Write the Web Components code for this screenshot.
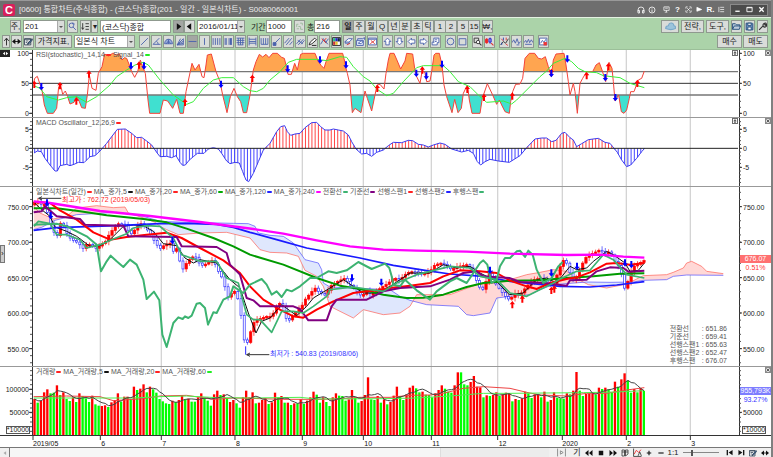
<!DOCTYPE html>
<html lang="ko">
<head>
<meta charset="utf-8">
<title>통합차트</title>
<style>
  body {
    margin: 0;
    font-family: "Liberation Sans", "Noto Sans CJK KR", sans-serif;
    font-size: 8px;
    color: #222;
    background: #fff;
  }
</style>
</head>
<body>
<chart-window></chart-window>

<script>
// 16x16 icons, drawn with currentColor unless noted
const ICONS = {
  search: '<circle cx="6" cy="6" r="4"/><path d="M9 9l5 5M8 1l4 3"/>',
  list: '<path d="M3 2v11M1 10l2 3 2-3M8 3h6M8 8h6M8 13h6"/>',
  play: '<path d="M5 2l8 6-8 6z" fill="#111" stroke="none"/>',
  back: '<path d="M11 2L3 8l8 6z" fill="#111" stroke="none"/>',
  swap: '<path d="M6 3L0 8l6 5zM10 3l6 5-6 5z" fill="#111" stroke="none"/><path d="M5 8h6" stroke="#111"/>',
  swapWhite: '<path d="M0 0h16v16H0z" fill="#222" stroke="none"/><path d="M7 4L2 8l5 4zM9 4l5 4-5 4z" fill="#fff" stroke="none"/>',
  up: '<path d="M8 15V3M4 7l4-5 4 5" stroke="#222"/>',
  edit: '<path d="M1 3h11v11H1z" fill="#fff" stroke="#345"/><path d="M1 4h11M3 7h5M3 10h3" stroke="#345"/><path d="M14 3l-7 8-1 2 3-1 6-7z" fill="#58c" stroke="#234"/>',
  sync: '<path d="M3 9V4h3M9 2h4v4M3 12h4M10 9v4h4M6 8h4" stroke="#9b9"/>',
  cloud: '<path d="M1 11q0-4 4-4 1-5 5-4 3 1 3 4 3 0 2 4-6 3-14 0z" fill="#9cc4dc" stroke="#7aa9c9"/>',
  folder: '<path d="M1 13V3h5l2 2h6v3M1 13l3-6h11l-2 6z" fill="#bcd" stroke="#234e7a"/>',
  save: '<path d="M2 2h11l1 1v11H2z" fill="#6d8fc0" stroke="#234e7a"/><path d="M5 2h6v4H5zM5 9h6v5H5z" fill="#fff" stroke="#234e7a"/>',
  wrench: '<path d="M2 14l7-7M9 7q-1-4 4-5l-1 3 2 1 1-2q1 5-4 5z" stroke="#333" stroke-width="2"/>',
  line: '<path d="M2 14L14 2"/>',
  angle: '<path d="M13 2L2 13h13M8 8q3 1 3 5"/>',
  fan: '<path d="M1 12q1-8 7-8t7 8z" fill="#9db0dd"/><path d="M4 12l4-5 4 5M8 4v8"/>',
  gann: '<path d="M2 14L13 3v11zM2 14L14 7M2 14L8 3M2 14l11-3"/>',
  hline: '<path d="M1 8h14"/>',
  vline: '<path d="M8 2v12"/>',
  vlines: '<path d="M2 2v12M6 2v12M10 2v12M14 2v12"/>',
  vbars: '<path d="M2 2v12M4 2v12M9 2v12M13 2v12" /><path d="M12 2v12" stroke-width="3"/>',
  grid: '<path d="M1 2h14M1 6h14M1 10h14M3 14h10M4 2v12M8 2v12M12 2v12"/>',
  hbars: '<path d="M2 1v14M14 1v14M2 4h12M2 8h12M2 11h12"/>',
  fork: '<path d="M2 2v11h12V2M6 2v11M10 2v11"/>',
  ray: '<path d="M14 2L5 11"/><path d="M2 10h5v5H2z" fill="#4a62ad"/>',
  channel: '<path d="M1 11L9 2M4 14L14 2M10 14l5-6"/>',
  hatch: '<path d="M1 12L8 4M4 14l9-10M9 13l6-7M3 6l9 6"/>',
  pencil: '<path d="M2 14l2-5 8-7 3 3-8 7z" fill="#fff" stroke="#222"/><path d="M7 15h8" stroke="#222"/>',
  cut: '<path d="M1 13l5-8 4 5 5-7M5 2l9 11" /><path d="M3 3l8 8M11 2l-4 5" stroke="#d33"/>',
  palette: '<path d="M1 1h14v14H1z" fill="#fff" stroke="#222"/><path d="M2 2h4v6H2z" fill="#2b8" stroke="none"/><path d="M6 2h4v6H6z" fill="#22c" stroke="none"/><path d="M10 2h4v6h-4z" fill="#124" stroke="none"/><path d="M2 8h4v6H2z" fill="#c33" stroke="none"/><path d="M6 8h4v6H6z" fill="#e5c22b" stroke="none"/>',
  erase: '<path d="M2 8l6-5h7l-6 6H2zM2 8v3h7V9" fill="#fff"/><path d="M5 14l6-3" stroke="#d33"/>',
  eraseAll: '<path d="M1 6h12v9H1zM3 6V3h9l3-2v4" fill="#dfe8fa"/><path d="M4 11l5-4 4 1-4 4z" fill="#fff"/>',
  chartX: '<path d="M1 2h14v12H1z" fill="#fff"/><path d="M1 4h14"/><path d="M4 12l8-6M5 6l7 6" stroke="#d33"/>',
  aUp: '<path d="M8 2l6 6h-3v6H5V8H2z" fill="#fff"/>',
  aDown: '<path d="M8 14l6-6h-3V2H5v6H2z" fill="#fff"/>',
  aLeft: '<path d="M2 8l6-6v3h6v6H8v3z" fill="#fff"/>',
  aRight: '<path d="M14 8L8 2v3H2v6h6v3z" fill="#fff"/>',
  scroll: '<path d="M5 2h9v8h-3v4H2V9h3z" fill="#fff"/><path d="M7 5h4M7 8h3M5 9v2"/>',
  circle: '<circle cx="8" cy="8" r="6"/>',
  square: '<path d="M2 3h12v11H2z"/>',
  zoomSel: '<path d="M2 2h8v8H2z" stroke="#333"/><circle cx="9" cy="9" r="3" fill="#fff" stroke="#333"/><path d="M11 11l4 4" stroke="#333" stroke-width="2"/>',
  candles: '<path d="M3 2v10M1 4h4v6H1z" fill="#e22" stroke="#e22"/><path d="M9 1v11M7 3h4v6H7z" fill="#fff" stroke="#22c"/><path d="M11 11l4 4" stroke="#d33" stroke-width="2"/>',
  signal: '<path d="M1 14l5-6 4 3 5-8" stroke="#333"/><path d="M2 3l4 4M10 12l4 3M11 1v5" stroke="#d33"/><path d="M6 1v5M3 10v4" stroke="#24a"/>',
  wave: '<path d="M0 10l3-5 3 6 3-8 3 9 3-4M8 14h5"/>',
  wave2: '<path d="M0 10l3-4 2 4 3-6 2 6 3-5 3 5M2 13h12"/>',
  chartRed: '<path d="M1 2h13v12H1z" fill="#fff"/><path d="M3 11l3-5 3 4 3-6"/><path d="M8 9h6v6H8z" fill="#e33" stroke="none"/>',
  headset: '<path d="M2 11V8q0-6 6-6t6 6v3M2 9h3v5H2zM11 9h3v5h-3z"/>',
  info: '<circle cx="8" cy="8" r="6"/><path d="M8 7v5M8 4v1"/>',
  screen: '<path d="M2 2h12v8H2zM8 10v4M4 14h6M5 5h6"/>',
  expand: '<path d="M2 6V2h4M10 2h4v4M14 10v4h-4M6 14H2v-4M5 5l6 6M11 5l-6 6"/>',
  flag: '<path d="M2 3l11 5-11 4z" fill="#fff"/>',
  menu: '<path d="M5 3h9M5 8h9M5 13h9M2 2v12"/>',
  min: '<path d="M3 12h10" stroke-width="3"/>',
  max: '<path d="M2 3h12v10H2zM2 4h12" stroke-width="2"/>',
  close: '<path d="M3 3l10 10M13 3L3 13" stroke-width="3"/>',
  rewind: '<path d="M7 2L0 8l7 6zM15 2L8 8l7 6z" fill="#111" stroke="none"/>',
  forward: '<path d="M1 2l7 6-7 6zM9 2l7 6-7 6z" fill="#111" stroke="none"/>',
  stop: '<path d="M2 2h12v12H2z" fill="#111" stroke="none"/>',
  step: '<path d="M1 1v14M15 1v14M6 5l5 3-5 3z" stroke="#888"/>',
  copy: '<path d="M2 2h5v12H2zM9 2h5v8M9 2v12l5-4M2 6h12" stroke="#333"/>',
  chartA: '<path d="M1 1v14h14" stroke="#444"/><path d="M2 11l4-7 4 4 4-5" stroke="#e33"/><path d="M9 14l3-7 3 7" stroke="#444"/>',
  plus: '<path d="M8 2v12M2 8h12" stroke="#111" stroke-width="3"/>',
  minus: '<path d="M1 8h14" stroke="#111" stroke-width="3"/>',
  first: '<path d="M3 2v12" stroke="#111" stroke-width="3"/><path d="M15 2L6 8l9 6z" fill="#111" stroke="none"/>',
  last: '<path d="M13 2v12" stroke="#111" stroke-width="3"/><path d="M1 2l9 6-9 6z" fill="#111" stroke="none"/>',
  left: '<path d="M11 3L4 8l7 5z" fill="#aaa" stroke="none"/>',
  paneBox: '<path d="M1 1h14v14H1z" fill="#fff" stroke="#222" stroke-width="2"/><path d="M4 7l4-4 4 4zM4 9l4 4 4-4z" fill="#222" stroke="none"/>',
  paneClose: '<path d="M1 1h14v14H1z" fill="#ddd" stroke="#555" stroke-width="2"/><path d="M4 4l8 8M12 4l-8 8" stroke="#333" stroke-width="2"/>',
};

const icon = (name, size = 9) =>
  `<svg width="${size}" height="${size}" viewBox="0 0 16 16" fill="none" stroke="currentColor" stroke-width="1.6" aria-hidden="true">${ICONS[name]}</svg>`;

class ToolButton extends HTMLElement {
  constructor() {
    super();
    const shadow = this.attachShadow({ mode: 'open' });
    const name = this.getAttribute('icon');
    shadow.innerHTML = `
      <style>
        :host { display: block; flex: none; width: 11px; height: 13px; }
        button {
          box-sizing: border-box;
          width: 100%;
          height: 100%;
          padding: 0;
          display: flex;
          align-items: center;
          justify-content: center;
          font: inherit;
          line-height: 10px;
          white-space: nowrap;
          color: var(--ink, #4a62ad);
          background: #d9dcd9;
          border: 1px solid #8f998f;
        }
        :host([text]) button { color: #222; }
        :host([on]) button { background: #a3a6a3; }
        :host([text][on]) button { font-weight: bold; }
        :host([flat]) button { background: none; border: none; }
        svg { flex: none; }
      </style>
      <button type="button" title="${this.getAttribute('label') || name || ''}">${name ? icon(name, this.getAttribute('size') || 9) : '<slot></slot>'}</button>
    `;
  }
}

class ToolSelect extends HTMLElement {
  constructor() {
    super();
    const shadow = this.attachShadow({ mode: 'open' });
    shadow.innerHTML = `
      <style>
        :host { display: grid; grid-template-columns: 1fr 7px; flex: none; height: 13px; box-sizing: border-box; border: 1px solid #8f998f; background: #fff; }
        select {
          grid-area: 1 / 1 / 2 / 3;
          appearance: none;
          min-width: 0;
          border: none;
          padding: 0 0 0 1px;
          font: inherit;
          color: #222;
          background: none;
          line-height: 11px;
        }
        span { grid-area: 1 / 2; background: #d9dcd9; border-left: 1px solid #aaa; display: flex; align-items: center; justify-content: center; pointer-events: none; }
        span::after { content: ""; border: 2px solid transparent; border-top-color: #555; border-bottom: none; }
      </style>
      <select aria-label="${this.getAttribute('label')}"><option>${this.getAttribute('value')}</option></select>
      <span></span>
    `;
  }
}

class ToolField extends HTMLElement {
  constructor() {
    super();
    const shadow = this.attachShadow({ mode: 'open' });
    const label = this.getAttribute('label');
    shadow.innerHTML = `
      <style>
        :host { display: flex; flex: none; height: 13px; }
        label { display: flex; width: 100%; align-items: center; white-space: nowrap; }
        label span { flex: none; }
        input {
          box-sizing: border-box;
          height: 13px;
          flex: 1;
          min-width: 0;
          border: 1px solid #8f998f;
          padding: 0 1px;
          font: inherit;
          color: #222;
          background: #fff;
        }
      </style>
      <label>${label ? `<span>${label}</span>` : ''}<input type="text" value="${this.getAttribute('value')}" aria-label="${label || '종목명'}"></label>
    `;
  }
}

class TitleBar extends HTMLElement {
  constructor() {
    super();
    const shadow = this.attachShadow({ mode: 'open' });
    shadow.innerHTML = `
      <style>
        :host {
          display: flex;
          align-items: center;
          box-sizing: border-box;
          height: 17px;
          padding: 1px 3px 0;
          color: #ececec;
          background: #6e6e6e;
          border-top: 1px solid #999;
          --ink: #fff;
        }
        .logo { width: 12px; height: 12px; margin-right: 4px; border-radius: 2px; background: #d91f5c; font-size: 11px; line-height: 12px; font-weight: bold; text-align: center; color: #fff; }
        h1 { margin: 0; flex: 1; font-size: 8px; line-height: 12px; font-weight: normal; white-space: nowrap; }
        nav { display: flex; }
        .window { margin-left: 3px; background: #4c4c4c; border: 1px solid #8a8a8a; }
        .window tool-button { height: 10px; width: 12px; }
        .gap { width: 4px; }
        b { color: #fff; }
      </style>
      <div class="logo">C</div>
      <h1><slot></slot></h1>
      <nav>
        <tool-button flat icon="headset" size="8"></tool-button>
        <tool-button flat icon="info" size="8"></tool-button>
        <div class="gap"></div>
        <tool-button flat icon="screen" size="7"></tool-button>
        <tool-button flat><b>?</b></tool-button>
        <tool-button flat icon="expand" size="7"></tool-button>
        <tool-button flat icon="flag" size="7"></tool-button>
        <tool-button flat><b>R.</b></tool-button>
        <tool-button flat icon="menu" size="7"></tool-button>
      </nav>
      <nav class="window">
        <tool-button flat icon="min" size="7"></tool-button>
        <tool-button flat icon="max" size="7"></tool-button>
        <tool-button flat icon="close" size="7"></tool-button>
      </nav>
    `;
  }
}

class SymbolBar extends HTMLElement {
  constructor() {
    super();
    const shadow = this.attachShadow({ mode: 'open' });
    const periods = ['일', '주', '월', 'Q', '년', '분', '초', '틱', '1', '2', '5', '15'];
    shadow.innerHTML = `
      <style>
        :host { display: flex; align-items: center; gap: 2px; padding: 2px 3px 2px 10px; background: #abd3a9; border-top: 1px solid #e4f2e2; }
        .join, .periods { display: flex; }
        .periods tool-button { width: 12px; margin-right: -1px; }
        .periods tool-button:nth-child(2n) { margin-right: 0; }
        .code { width: 42px; }
        .name { width: 71px; }
        .date { width: 48px; margin-right: 4px; }
        .term { width: 41px; }
        .count { width: 33px; }
        .end { margin-left: auto; display: flex; gap: 2px; }
        .w18 { width: 18px; }
        .w24 { width: 23px; }
      </style>
      <tool-button text>주,</tool-button>
      <tool-select class="code" label="종목코드" value="201"></tool-select>
      <tool-button icon="search"></tool-button>
      <div class="join">
        <tool-button icon="list" style="--ink:#333"></tool-button>
        <tool-button text style="width:7px">▾</tool-button>
      </div>
      <tool-field class="name" value="(코스닥)종합"></tool-field>
      <div class="join">
        <tool-button on icon="play"></tool-button>
        <tool-button icon="back"></tool-button>
      </div>
      <tool-select class="date" label="날짜" value="2016/01/11"></tool-select>
      <tool-field class="term" label="기간" value="1000"></tool-field>
      <tool-button icon="sync"></tool-button>
      <tool-field class="count" label="총" value="216"></tool-field>
      <div class="periods">${periods.map((p, i) => `<tool-button text ${i ? '' : 'on'}>${p}</tool-button>`).join('')}</div>
      <tool-button text>₩,</tool-button>
      <div class="end">
        <tool-button class="w18" icon="cloud" size="11"></tool-button>
        <tool-button class="w24" text>전략,</tool-button>
        <tool-button class="w24" text>도구,</tool-button>
        <tool-button icon="folder"></tool-button>
        <tool-button icon="save"></tool-button>
        <tool-button icon="wrench"></tool-button>
      </div>
    `;
  }
}

class DrawingBar extends HTMLElement {
  constructor() {
    super();
    const shadow = this.attachShadow({ mode: 'open' });
    const groups = [
      ['line', 'angle', 'fan', 'gann', 'hline', 'vline', 'vlines', 'vbars', 'grid', 'hbars', 'fork', 'ray', 'channel', 'hatch', 'pencil', 'cut', 'palette', 'erase', 'eraseAll', 'chartX'],
      ['aUp', 'aDown', 'aLeft', 'aRight', 'scroll'],
      ['circle', 'square'],
      ['zoomSel', 'candles'],
      ['signal', 'wave', 'wave2'],
      ['chartRed'],
    ];
    const group = names => `<div class="group">${names.map(n => `<tool-button icon="${n}" ${n === 'hline' ? 'on' : ''}></tool-button>`).join('')}</div>`;
    shadow.innerHTML = `
      <style>
        :host { display: flex; align-items: center; gap: 1px; padding: 0 3px 1px 2px; background: #abd3a9; border-bottom: 1px solid #9bbf99; }
        .group { display: flex; gap: 1px; margin-left: 3px; }
        .index { width: 37px; }
        .type { width: 61px; margin-left: 1px; }
        .end { margin-left: auto; display: flex; gap: 1px; }
        .end tool-button { width: 25px; }
      </style>
      <tool-button icon="up" style="width:8px"></tool-button>
      <tool-button icon="swap"></tool-button>
      <tool-button icon="edit"></tool-button>
      <tool-button class="index" text>가격지표,</tool-button>
      <tool-select class="type" label="차트 종류" value="일본식 차트"></tool-select>
      ${groups.map(group).join('')}
      <div class="end">
        <tool-button text>매수</tool-button>
        <tool-button text>매도</tool-button>
      </div>
    `;
  }
}

class ChartLegend extends HTMLElement {
  constructor() {
    super();
    const shadow = this.attachShadow({ mode: 'open' });
    const items = this.getAttribute('items').split('|').map(s => s.split('='));
    shadow.innerHTML = `
      <style>
        :host { display: flex; gap: 2px; font-size: 7px; line-height: 9px; color: #555; white-space: nowrap; }
        span { display: flex; align-items: center; gap: 1px; }
        i { width: 5px; height: 2px; border-radius: 1px; }
      </style>
      ${items.map(([text, color]) => `<span>${text}<i style="background:${color}"></i></span>`).join('')}
    `;
  }
}

/* ---- series, in plot units: three units to a pixel ---- */
const pts = s => s.trim().split(/\s+/).map(p => p.split(',').map(Number));
const path = p => 'M' + p.map(q => q.join(' ')).join('L');

const RSI = pts(`101,115 104,100 112,94 120,118 125,130 133,180 142,205 160,205 170,190 176,125 182,120 188,148 196,138 203,155 210,177 222,172 230,155 238,170 245,188 256,190 262,150 268,90 276,130 288,136 295,85 306,65 314,27 325,33 338,25 350,30 358,26 366,45 373,38 380,40 388,60 395,80 404,97 413,80 421,45 430,70 436,85 444,165 449,205 480,205 490,165 503,168 518,190 530,163 540,205 550,205 558,140 576,55 585,75 597,58 606,95 612,98 618,60 622,30 634,27 648,80 660,110 668,150 681,203 691,155 702,130 712,155 722,170 730,203 740,203 750,150
  760,75 768,50 778,28 788,36 798,28 807,38 818,25 832,25 845,37 853,40 860,68 864,88 874,88 884,55 892,75 902,28 910,25 945,25 955,50 964,62 972,70 978,50 987,25 1028,25 1033,45 1038,70 1042,85 1050,120 1057,203 1065,190 1083,203 1090,165 1095,138 1102,160 1115,198 1125,150 1131,120 1140,118 1152,132 1158,85 1165,45 1170,25 1182,25 1192,48 1202,72 1215,48 1220,25 1238,27 1244,70 1250,95 1260,115 1267,75 1275,85 1280,110 1290,108 1295,80 1302,30 1307,25 1318,25 1326,60 1332,120 1340,155 1356,203 1364,163 1374,203 1384,190 1390,145 1402,120 1408,165 1416,205 1440,205 1447,160 1462,116 1478,150 1490,178 1498,165 1505,180 1515,200 1528,205
  1532,170 1538,140 1547,118 1560,117 1568,100 1575,40 1588,25 1604,25 1615,40 1625,42 1636,35 1645,65 1654,95 1660,45 1668,27 1692,25 1698,60 1705,110 1710,150 1720,115 1725,140 1732,205 1740,115 1748,100 1760,80 1778,80 1788,60 1798,53 1806,75 1817,110 1827,52 1836,70 1840,110 1845,168 1856,150 1864,200 1872,205 1880,195 1888,160 1892,140 1902,140 1910,118 1915,105 1925,100 1933,78`);
const RSI_SIGNAL = pts(`101,122 120,130 140,155 175,165 200,158 230,155 260,172 290,155 330,120 350,95 380,75 405,60 430,52 445,60 480,105 520,150 560,178 580,170 610,130 640,105 665,98 700,98 730,125 750,137 770,140 790,130 810,105 840,80 865,52 890,43 950,43 980,47 1020,35 1040,37 1060,65 1090,95 1110,108 1130,132 1160,152 1180,145 1210,110 1250,68 1270,62 1330,62 1350,80 1375,110 1410,125 1440,155 1460,172 1510,168 1535,177 1550,165 1580,135 1620,95 1640,78 1660,55 1695,40 1715,50 1735,70 1755,80 1790,83 1810,92 1860,98 1890,115 1933,128`);
const MACD = pts(`102,324 112,318 124,320 135,340 150,360 165,378 172,378 180,362 190,360 200,358 210,362 222,358 235,352 252,353 260,345 270,335 285,332 300,318 320,295 335,275 352,253 376,252 395,265 410,278 425,277 440,288 455,300 470,322 480,335 500,334 515,338 528,332 540,352 548,361 556,360 568,345 580,335 592,325 612,325 625,312 640,308 655,312 665,325 680,348 690,356 705,352 718,354 728,380 738,405 746,410
  760,385 775,350 790,315 810,295 830,260 842,245 854,242 862,260 872,271 885,267 900,265 915,248 935,233 950,232 962,245 975,255 990,255 1000,252 1015,255 1030,258 1045,270 1055,290 1068,312 1085,327 1100,325 1115,334 1130,322 1150,315 1165,302 1180,292 1205,293 1225,286 1238,287 1255,298 1270,300 1285,306 1300,300 1320,294 1335,298 1355,312 1385,321 1405,316 1420,325 1432,350 1442,360 1455,350 1470,343 1495,348 1528,352
  1560,332 1580,308 1605,282 1625,279 1640,279 1655,290 1668,286 1685,265 1695,262 1710,278 1720,285 1730,305 1745,296 1765,284 1795,280 1815,292 1830,295 1838,305 1852,322 1865,345 1880,365 1892,360 1910,340 1925,320 1933,311`);
const VOLUME = `r117 g128 r122 r97 r88 g100 g98 r76 g105 r97 g117 g123 r112 g126 r100 g108 g115 g126 r107 g133 g137 r138 r136 g141 r127 r120 r100 g125 r110 r110 g120 r80 g90 r86 r73 g97 r80 g88 g98 g117 g124 g130 g132 r122 g126 r120 r105 g118 r116 g125 g125 r112 r100 g113 g122 g137 r103 r92 g105 r103 g115 r126 r120 g130 g143 r112 r92 r112 r97 g130 r128
  r120 r115 g132 r127 r98 g112 r108 g128 r128 g135 r130 g130 r117 g132 r122 r112 r95 g104 g128 r112 g126 g138 r112 r100 g107 g108 g122 r118 r90 g112 g128 r123 r105 r52 g118 g120 r108 g128 r118 g133 r126 r107 r80 g108 g120 r103 r83 r77 g85 g97 r95 g104 g105 g112 r100 r90 r76 g86 g95 g98 r76 r37 g37 g73 g76 r66 r48 r80 r82 g112 r106 g108 r105 r97 g108 r103 r98 r100
  g124 r117 g120 r115 r95 g100 g114 r103 r105 g112 r95 g125 r120 r97 g113 g115 g116 r100 g103 r92 r36 g92 g108 r102 r100 r100 g104 r83 g87 r83 g88 g97 r65 g80 r58 r40 g62 g98 r87 g97 r84 g93`.trim().split(/\s+/).map(v => [v[0], +v.slice(1)]);
const VOLUME_20 = pts('101,110 200,108 300,110 340,122 430,116 480,108 560,106 640,118 700,114 750,115 850,118 950,118 1010,117 1080,112 1170,112 1230,106 1290,105 1330,100 1390,85 1450,80 1530,85 1580,97 1620,105 1700,108 1760,100 1820,100 1880,90 1933,83');
const VOLUME_60 = pts('101,114 400,114 480,110 560,108 650,113 760,114 900,112 950,117 1150,116 1250,114 1350,108 1450,100 1530,100 1750,98 1850,96 1933,92');

const MA5 = pts('104,60 125,80 150,100 165,132 200,145 230,160 270,190 300,188 330,170 350,150 370,130 400,126 430,128 460,145 490,182 530,188 555,225 580,240 600,230 650,240 690,290 720,315 745,390 768,450 785,415 810,405 845,365 890,398 920,370 940,345 990,315 1030,290 1060,310 1090,330 1130,330 1170,310 1200,290 1230,270 1290,270 1330,245 1370,255 1410,250 1440,270 1490,295 1528,335 1570,330 1610,290 1640,285 1670,300 1710,250 1730,260 1760,255 1780,235 1820,205 1840,215 1875,240 1890,265 1915,262 1933,240');
const MA20 = pts('101,56 150,60 180,82 230,110 280,148 330,170 380,162 440,155 500,149 545,165 600,195 670,232 720,270 750,310 790,350 840,380 880,400 910,404 950,380 1000,355 1060,330 1100,325 1140,322 1170,315 1230,308 1290,300 1330,280 1380,262 1440,265 1490,270 1530,293 1580,310 1610,318 1650,300 1700,288 1730,283 1770,268 1820,242 1850,240 1890,245 1933,240');
const MA60 = pts('101,76 170,76 240,85 320,97 430,108 500,118 560,137 640,165 700,190 750,215 850,245 950,285 1020,308 1080,318 1150,335 1220,345 1270,344 1330,335 1400,312 1450,300 1530,293 1620,292 1700,285 1780,280 1860,272 1933,271');
const MA120 = pts('101,142 170,134 350,128 480,122 560,121 650,124 700,133 750,148 830,170 920,195 1000,210 1080,225 1180,247 1280,263 1350,273 1450,280 1530,295 1680,310 1770,312 1850,306 1933,296');
const MA240 = pts('101,55 150,60 300,84 450,99 600,117 760,138 850,152 950,172 1050,190 1150,200 1250,203 1400,206 1530,212 1700,216 1800,215 1870,221 1933,224');
const BASE = pts('101,88 125,85 135,70 170,100 240,108 255,125 370,128 385,160 530,162 545,190 650,192 680,210 690,245 720,275 740,345 760,352 780,370 880,370 900,378 925,412 980,412 995,370 1010,350 1100,350 1150,325 1200,315 1290,310 1350,290 1390,270 1430,265 1450,280 1528,285 1560,297 1630,300 1700,308 1710,292 1760,290 1790,265 1830,253 1870,255 1885,266 1933,263');
const CONVERSION = pts('102,130 115,115 150,122 170,155 200,155 240,170 260,195 300,185 340,168 380,152 400,135 440,128 480,130 520,165 545,215 600,235 650,235 680,285 715,300 740,395 760,410 780,410 815,448 845,385 880,385 910,390 940,370 980,340 990,320 1060,312 1110,320 1150,325 1190,300 1250,275 1290,265 1350,250 1410,255 1440,280 1490,290 1530,330 1580,340 1610,325 1660,300 1680,288 1730,265 1770,262 1810,215 1840,230 1880,275 1933,285');
const LAGGING = pts('101,125 170,122 200,130 230,145 260,160 290,185 303,265 320,235 332,218 350,235 370,252 390,230 410,245 430,290 440,348 462,326 478,352 487,455 500,492 520,420 535,403 548,408 555,400 565,405 575,398 590,362 600,360 615,375 624,425 640,388 650,390 670,350 690,340 700,310 730,330 750,305 785,288 800,305 815,335 830,325 845,342 860,320 875,325 900,310 930,285 950,285 985,265 1010,270 1040,262 1075,237 1115,258 1155,242 1168,255 1175,280 1180,305 1200,310 1215,290 1250,322 1290,350 1310,325 1350,295 1370,285 1400,300 1420,270 1440,240 1450,232 1462,245 1475,300 1490,290 1500,250 1515,225 1530,225 1550,205 1560,203 1575,222 1585,203 1598,215 1610,260 1630,300 1655,285 1675,250 1688,237');
const SPAN_A = pts('101,70 120,90 160,108 200,100 230,75 290,68 340,74 375,72 385,90 440,108 465,118 480,130 500,140 535,155 600,150 680,148 750,165 780,200 810,208 860,210 895,220 915,262 950,280 970,310 990,370 1050,400 1060,405 1090,380 1150,395 1200,390 1230,370 1250,335 1350,335 1390,320 1430,305 1490,300 1530,290 1580,275 1620,268 1660,260 1700,265 1740,292 1765,305 1820,315 1880,303 1930,278 2000,275 2020,268 2050,255 2060,240 2075,235 2105,250 2120,265 2170,272');
const SPAN_B = pts('101,140 125,133 165,112 230,95 350,88 430,100 480,115 560,118 700,121 745,122 765,130 775,150 810,157 850,160 880,180 915,230 955,240 965,260 970,300 990,312 1170,320 1200,340 1230,352 1280,365 1375,370 1400,395 1420,398 1470,390 1490,345 1530,340 1590,335 1620,320 1660,305 1760,297 1830,298 1900,297 1930,292 2000,290 2020,280 2060,276 2170,277');
const CLOSE = pts('104,58 113,55 122,65 132,62 142,85 150,120 160,140 168,175 180,120 190,125 200,150 210,165 220,172 235,180 250,198 262,180 280,192 292,198 300,185 315,178 330,150 345,132 355,122 375,125 392,155 405,140 420,120 432,128 450,150 465,178 480,198 495,185 510,180 520,205 532,195 545,265 556,245 572,225 585,218 600,245 612,248 625,235 640,232 655,265 670,290 682,345 695,330 705,325 720,365 728,450 737,490 747,468 757,425 768,410 777,408 800,400 815,400 830,370 845,355 862,420 870,408 882,395 895,380 905,370 915,350 930,332 945,315 960,330 978,335 990,310 1005,300 1020,292 1035,285 1045,300 1070,325 1085,340 1100,325 1115,335 1135,320 1150,310 1165,300 1180,285 1200,290 1220,270 1240,265 1270,272 1290,265 1305,245 1325,240 1340,248 1355,260 1375,250 1400,245 1420,265 1435,310 1450,320 1460,290 1470,265 1485,300 1500,320 1520,345 1530,350 1545,332 1565,330 1580,310 1600,290 1625,285 1645,300 1660,305 1675,265 1688,232 1698,235 1710,270 1725,295 1735,270 1755,225 1770,215 1785,208 1800,200 1815,212 1830,205 1845,235 1860,255 1875,320 1882,300 1892,270 1905,245 1920,240 1933,232');
const MONTHS = [[301, '6'], [484, '7'], [705, '8'], [907, '9'], [1090, '10'], [1294, '11'], [1493, '12'], [1687, '2020'], [1879, '2'], [2071, '3']];

const FIRST = 104, LAST = 1932;

function valueAt(series, x) {
  let i = 1;
  while (i < series.length - 1 && series[i][0] < x) i++;
  const [x0, y0] = series[i - 1], [x1, y1] = series[i];
  return y0 + (y1 - y0) * Math.min(1, Math.max(0, (x - x0) / (x1 - x0)));
}
const bars = n => Array.from({ length: n }, (_, i) => FIRST + i * (LAST - FIRST) / (n - 1));
const line = (series, color, width = 3) => `<path d="${path(series)}" fill="none" stroke="${color}" stroke-width="${width}" stroke-linejoin="round"/>`;
const above = s => `${path(s)}V-50H${s[0][0]}Z`;
const below = s => `${path(s)}V700H${s[0][0]}Z`;
const arrows = (list, dir, color) => pts(list).map(([x, y]) =>
  `<path d="M${x} ${y - 11 * dir}l8 ${10 * dir}h-5v${12 * dir}h-6v${-12 * dir}h-5z" fill="${color}"/>`).join('');

function drawRsi() {
  return `
    <clipPath id="hi"><rect x="99" y="0" width="2115" height="80"/></clipPath>
    <clipPath id="lo"><rect x="99" y="150" width="2115" height="80"/></clipPath>
    <path d="${below(RSI)}" fill="#ffa550" clip-path="url(#hi)"/>
    <path d="${above(RSI)}" fill="#40e0d0" clip-path="url(#lo)"/>
    <path d="M99 80H2214M99 150H2214" stroke="#777" stroke-width="4"/>
    <path d="M99 115H2214" stroke="#333" stroke-width="3"/>
    ${line(RSI, '#f4433a')}
    ${line(RSI_SIGNAL, '#3cf03c')}
    ${arrows('103,118 180,122 229,168 267,87 417,60 555,172 757,100 1132,130 1267,75 1402,133 1452,157 1537,153 1654,82 1760,92 1825,65 1912,115', 1, '#f00')}
    ${arrows('124,125 393,63 432,63 663,118 863,72 960,45 1038,60 1249,85 1279,93 1326,58 1654,86 1702,42 1816,98 1846,158', -1, '#00f')}`;
}

function drawMacd() {
  const stems = bars(190).map(x => {
    const y = valueAt(MACD, x);
    return `<path d="M${x} 310V${y}" stroke="${y > 310 ? '#4646ff' : '#ff4646'}" stroke-width="3"/>`;
  }).join('');
  return stems + line(MACD, '#3c3cf0') + '<path d="M99 310H2214" stroke="#222" stroke-width="3"/>';
}

function drawPrice() {
  const xs = bars(190);
  const candles = xs.map((x, i) => {
    const close = valueAt(CLOSE, x);
    const open = i ? valueAt(CLOSE, xs[i - 1]) : close + 8;
    const top = Math.min(open, close), h = Math.max(5, Math.abs(open - close));
    const wick = 4 + (i * 7) % 9;
    const up = close <= open;
    const w = up ? 7 : 6;
    return `<g stroke="${up ? '#f00' : '#2828ff'}" fill="${up ? '#f00' : '#fff'}" stroke-width="2"><path d="M${x} ${top - wick}V${top + h + wick}"/><rect x="${x - w / 2}" y="${top}" width="${w}" height="${h}"/></g>`;
  }).join('');
  return `
    <clipPath id="aboveB"><path d="${above(SPAN_B)}"/></clipPath>
    <clipPath id="aboveA"><path d="${above(SPAN_A)}"/></clipPath>
    <path d="${below(SPAN_A)}" fill="#ffd8d6" clip-path="url(#aboveB)"/>
    <path d="${below(SPAN_B)}" fill="#dfe7fd" clip-path="url(#aboveA)"/>
    ${line(SPAN_A, '#ff5a50', 2)}
    ${line(SPAN_B, '#4a4aff', 2)}
    ${candles}
    ${line(MA5, '#111', 3)}
    ${line(MA120, '#1919ff', 5)}
    ${line(MA60, '#009a00', 6)}
    ${line(MA20, '#f00', 6)}
    ${line(BASE, '#800080', 6)}
    ${line(CONVERSION, '#3cb371', 5)}
    ${line(LAGGING, '#3cb371', 6)}
    ${line(MA240, '#ff00ff', 7)}
    ${arrows('1537,365 1567,348 1654,322 1663,318', 1, '#f00')}
    ${arrows('141,60 152,98 517,172 1056,285 1144,298 1470,262 1654,270 1731,250 1875,240 1894,245', -1, '#00f')}
    <path d="M116 46H184M126 41l-10 5 10 5M740 515H808M750 510l-10 5 10 5" fill="none" stroke="#333" stroke-width="3"/>
    <path d="M737 490V515" stroke="#2828ff" stroke-width="3"/>`;
}

function drawVolume() {
  const xs = bars(VOLUME.length);
  const columns = VOLUME.map(([c, top], i) =>
    `<rect x="${xs[i] - 4}" y="${top}" width="7" height="${225 - top}" fill="${c === 'r' ? '#f00' : '#0f0'}"/>`).join('');
  const ma5 = xs.map((x, i) => {
    const part = VOLUME.slice(Math.max(0, i - 4), i + 1);
    return [x, part.reduce((sum, v) => sum + v[1], 0) / part.length];
  });
  return columns + line(VOLUME_20, '#e44') + line(VOLUME_60, '#4cf04c') + line(ma5, '#444');
}

const PANES = {
  rsi: { top: 15, height: 201, draw: drawRsi, minor: [25, 18, 11], ticks: [[25, '100'], [115, '50'], [205, '0']] },
  macd: { top: 219, height: 204, draw: drawMacd, minor: [230, 11.4, 17], ticks: [[253, '5'], [310, '0'], [367, '-5']] },
  price: { top: 12, height: 537, draw: drawPrice, minor: [28, 21.3, 25], ticks: [[71, '750.00'], [178, '700.00'], [284, '650.00'], [390, '600.00'], [497, '550.00']] },
  volume: { top: 21, height: 204, draw: drawVolume, minor: [32, 14, 14], ticks: [[88, '100000'], [157, '50000']] },
};

class ChartPane extends HTMLElement {
  constructor() {
    super();
    const shadow = this.attachShadow({ mode: 'open' });
    const name = this.getAttribute('name');
    const pane = PANES[name];
    const pct = y => ((y - pane.top) / pane.height * 100).toFixed(2) + '%';
    const [from, step, count] = pane.minor;
    const minor = Array.from({ length: count }, (_, i) => pct(from + i * step));
    const hidden = (this.getAttribute('hide-right') || '').split(',');

    // ticks sit left of the left axis line and right of the right one
    const axis = side => {
      const left = side === 'left';
      const x = left ? 32 : 1;
      const d = left ? -1 : 1;
      const rows = pane.ticks.filter(t => left || !hidden.includes(t[1]));
      return `<svg class="axis">
        <path d="M${x + 0.5} 0V900" stroke="#333"/>
        ${minor.map(y => `<line x1="${x}" x2="${x + d * 2}" y1="${y}" y2="${y}" stroke="#555"/>`).join('')}
        ${rows.map(([y, text]) => `<line x1="${x}" x2="${x + d * 3}" y1="${pct(y)}" y2="${pct(y)}" stroke="#333"/>
          <text x="${left ? 29 : 5}" y="${pct(y)}" dy="3" text-anchor="${left ? 'end' : 'start'}">${text}</text>`).join('')}
      </svg>`;
    };

    shadow.innerHTML = `
      <style>
        :host { display: grid; grid-template-columns: 33px 1fr 33px; position: relative; border-bottom: 1px solid #999; background: #fff; }
        svg { display: block; width: 100%; height: 100%; min-height: 0; }
        .plot, .left, .right { position: relative; min-height: 0; min-width: 0; }
        .plot svg, .axis { position: absolute; inset: 0; }
        text { font-size: 7px; fill: #222; }
        chart-legend { position: absolute; left: 3px; top: 0; }
        .corner { position: absolute; top: 0; width: 6px; height: 6px; right: 0; }
        .corner svg { position: static; width: 6px; height: 6px; }
      </style>
      <div class="left">${axis('left')}<slot name="left"></slot></div>
      <div class="plot">
        <svg viewBox="99 ${pane.top} 2115 ${pane.height}" preserveAspectRatio="none">
          <path d="${MONTHS.map(m => `M${m[0]} 0V700`).join('')}" stroke="#d4d4d4" stroke-width="4"/>
          ${pane.draw()}
        </svg>
        <chart-legend items="${this.getAttribute('legend')}"></chart-legend>
        ${this.hasAttribute('movable') ? `<div class="corner">${icon('paneBox', 6)}</div>` : ''}
        <slot></slot>
      </div>
      <div class="right">${axis('right')}${name === 'price' ? '' : `<div class="corner">${icon('paneClose', 6)}</div>`}<slot name="right"></slot></div>
    `;
  }
}

class TimeAxis extends HTMLElement {
  constructor() {
    super();
    const shadow = this.attachShadow({ mode: 'open' });
    const labels = [[99, '2019/05'], ...MONTHS];
    const pct = x => ((x - 99) / 21.15).toFixed(2) + '%';
    shadow.innerHTML = `
      <style>
        :host { display: block; padding: 0 33px; height: 11px; border-bottom: 1px solid #777; }
        svg { display: block; width: 100%; height: 11px; overflow: visible; }
        text { font-size: 7px; fill: #111; }
      </style>
      <svg>
        ${labels.map(([x, text]) => `<line x1="${pct(x)}" x2="${pct(x)}" y1="0" y2="4" stroke="#333"/><text x="${pct(x)}" y="10" dx="${text.length > 3 ? 0 : 1}">${text}</text>`).join('')}
      </svg>
    `;
  }
}

class ReplayBar extends HTMLElement {
  constructor() {
    super();
    const shadow = this.attachShadow({ mode: 'open' });
    const button = (name, size = 9) => `<tool-button flat icon="${name}" size="${size}"></tool-button>`;
    shadow.innerHTML = `
      <style>
        :host { display: flex; align-items: center; height: 9px; background: #f0f0f0; --ink: #333; }
        tool-button { height: 9px; width: 12px; }
        .track { flex: 1; height: 9px; display: flex; justify-content: flex-end; background: #f6f6f6; border-left: 1px solid #777; }
        .thumb { width: 20%; background: #ececec; border-left: 1px solid #ddd; }
        .step { margin: 0 4px 0 6px; }
        input { appearance: none; width: 36px; height: 9px; margin: 0 4px; background: linear-gradient(#888, #888) center / 100% 1px no-repeat; }
        input::-webkit-slider-thumb { appearance: none; width: 2px; height: 6px; background: #555; }
      </style>
      <tool-button flat icon="left" size="6" style="width:9px"></tool-button>
      <div class="track"><div class="thumb"></div></div>
      <tool-button class="step" flat icon="step"></tool-button>
      <tool-button flat text>기</tool-button>
      ${button('rewind', 8)}${button('stop', 6)}${button('forward', 8)}${button('copy', 8)}${button('chartA')}${button('plus', 6)}${button('minus', 6)}
      <tool-button flat text>1:1</tool-button>
      <input type="range" min="0" max="100" value="24" aria-label="확대">
      ${button('first', 7)}${button('last', 7)}${button('edit', 8)}${button('swap', 8)}
    `;
  }
}

class ChartWindow extends HTMLElement {
  constructor() {
    super();
    const shadow = this.attachShadow({ mode: 'open' });
    const spans = [['전환선', '651.86'], ['기준선', '659.41'], ['선행스팬1', '655.63'], ['선행스팬2', '652.47'], ['후행스팬', '676.07']];
    shadow.innerHTML = `
      <style>
        :host { display: flex; flex-direction: column; min-height: 100vh; box-sizing: border-box; border-right: 2px solid #808080; position: relative; }
        chart-pane { height: 67px; flex: none; }
        .macd { height: 68px; }
        .price { min-height: 179px; flex: 1; height: auto; }
        .volume { height: 68px; border-bottom-color: #333; }
        .note { position: absolute; font-size: 7px; line-height: 9px; white-space: nowrap; }
        .high { left: 29px; top: 8px; color: #f22; }
        .low { left: 237px; bottom: 8px; color: #33f; }
        table { position: absolute; right: 11px; bottom: 1px; border-spacing: 0; font-size: 7px; line-height: 8px; color: #555; }
        td, th { padding: 0; font-weight: normal; text-align: left; white-space: nowrap; }
        th { width: 32px; }
        .badge { position: absolute; left: 2px; right: 0; text-align: center; font-size: 7px; line-height: 8px; }
        .now { top: 68px; background: #ff7070; color: #fff; }
        .rate { top: 77px; color: #f33; }
        .sum { top: 20px; background: #7d7dff; color: #fff; }
        .share { top: 29px; color: #33f; }
        .unit { position: absolute; bottom: 1px; border: 1px solid #555; font-size: 7px; line-height: 6px; }
        .unit.l { right: 3px; }
        .unit.r { left: 4px; }
        .toggle { position: absolute; left: 0; top: 50px; width: 10px; height: 7px; display: flex; justify-content: center; background: #222; }
        .tab { position: absolute; left: 0; top: 245px; width: 5px; height: 18px; padding: 0; border: 1px solid #777; background: #ccc; font-size: 7px; line-height: 14px; }
      </style>
      <title-bar>[0600] 통합차트(주식종합) - (코스닥)종합(201 - 일간 - 일본식차트) - S0080060001</title-bar>
      <symbol-bar></symbol-bar>
      <drawing-bar></drawing-bar>
      <chart-pane name="rsi" movable legend="RSI(stochastic)_14,14=#f22|Signal_14=#2e2"></chart-pane>
      <chart-pane class="macd" name="macd" movable legend="MACD Oscillator_12,26,9=#f22"></chart-pane>
      <chart-pane class="price" name="price" legend="일본식차트(일간)=#f22|MA_종가,5=#111|MA_종가,20=#f22|MA_종가,60=#0a0|MA_종가,120=#22f|MA_종가,240=#f0f|전환선=#3cb371|기준선=#800080|선행스팬1=#f22|선행스팬2=#22f|후행스팬=#3cb371">
        <div class="note high">최고가 : 762.72 (2019/05/03)</div>
        <div class="note low">최저가 : 540.83 (2019/08/06)</div>
        <table>${spans.map(([k, v]) => `<tr><th scope="row">${k}</th><td>: ${v}</td></tr>`).join('')}</table>
        <div slot="right" class="badge now">676.07</div>
        <div slot="right" class="badge rate">0.51%</div>
      </chart-pane>
      <chart-pane class="volume" name="volume" hide-right="100000" legend="거래량=#f22|MA_거래량,5=#111|MA_거래량,20=#f22|MA_거래량,60=#2e2">
        <div slot="left" class="unit l">*10000</div>
        <div slot="right" class="badge sum">955,793K</div>
        <div slot="right" class="badge share">93.27%</div>
        <div slot="right" class="unit r">*10000</div>
      </chart-pane>
      <time-axis></time-axis>
      <replay-bar></replay-bar>
      <div class="toggle">${icon('swapWhite', 7)}</div>
      <button class="tab" type="button" title="펼치기">›</button>
    `;
  }
}

customElements.define('tool-button', ToolButton);
customElements.define('tool-select', ToolSelect);
customElements.define('tool-field', ToolField);
customElements.define('title-bar', TitleBar);
customElements.define('symbol-bar', SymbolBar);
customElements.define('drawing-bar', DrawingBar);
customElements.define('chart-legend', ChartLegend);
customElements.define('chart-pane', ChartPane);
customElements.define('time-axis', TimeAxis);
customElements.define('replay-bar', ReplayBar);
customElements.define('chart-window', ChartWindow);
</script>
</body>
</html>
